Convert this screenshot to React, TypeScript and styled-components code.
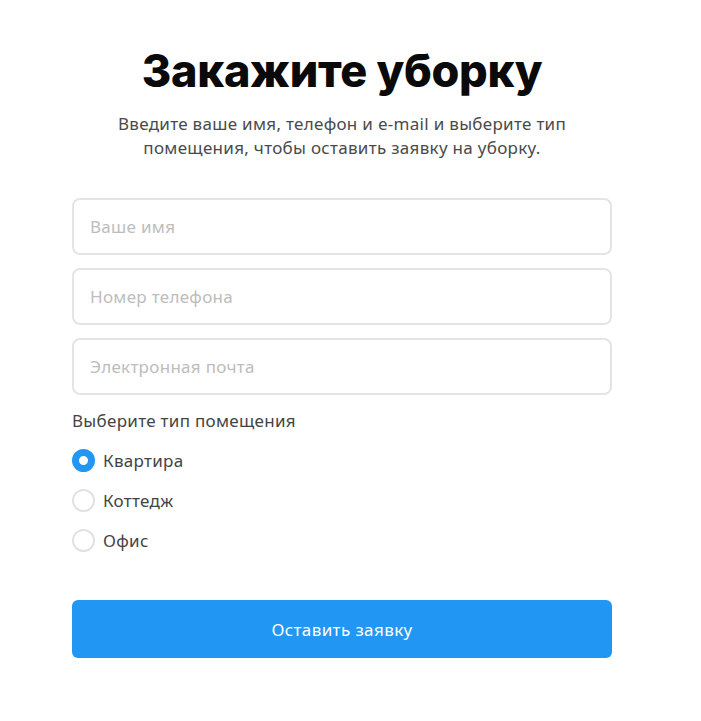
import React, { useState } from 'react'
import styled, { createGlobalStyle } from 'styled-components'

const GlobalStyle = createGlobalStyle`
  body {
    margin: 0;
    background: #fff;
    font-family: 'Noto Sans', 'Open Sans', sans-serif;
    letter-spacing: 0.3px;
  }
`

const Page = styled.main`
  width: 540px;
  margin-left: 72px;
  padding-top: 41px;
`

const Title = styled.h1`
  margin: 0;
  text-align: center;
  font-family: Inter, 'Noto Sans', sans-serif;
  font-size: 45px;
  font-weight: 800;
  line-height: 60px;
  letter-spacing: -0.3px;
  color: #0a0a0a;
`

const Lead = styled.p`
  margin: 11px auto 0;
  width: 480px;
  text-align: center;
  font-size: 17px;
  line-height: 24px;
  color: #4a4a4a;
`

const Form = styled.form`
  margin-top: 38px;
  display: flex;
  flex-direction: column;
`

const Fields = styled.div`
  display: flex;
  flex-direction: column;
  gap: 13px;
`

const Input = styled.input`
  box-sizing: border-box;
  width: 100%;
  height: 57px;
  padding: 0 16px;
  border: 2px solid #e4e4e4;
  border-radius: 8px;
  font-family: inherit;
  font-size: 17px;
  letter-spacing: 0.3px;
  color: #333;
  outline: none;
  &::placeholder {
    color: #bdbdbd;
  }
`

const Legend = styled.div`
  margin-top: 14px;
  font-size: 17px;
  line-height: 24px;
  color: #444;
`

const Options = styled.div`
  margin-top: 16px;
  display: flex;
  flex-direction: column;
  gap: 17px;
`

const Option = styled.label`
  display: flex;
  align-items: center;
  gap: 8px;
  font-size: 17px;
  line-height: 22px;
  color: #444;
  cursor: pointer;
`

const Dot = styled.span<{ $on: boolean }>`
  box-sizing: border-box;
  width: 23px;
  height: 23px;
  border-radius: 50%;
  border: ${({ $on }) => ($on ? '7px solid #2196f3' : '2px solid #e2e2e2')};
  background: #fff;
`

const HiddenRadio = styled.input`
  display: none;
`

const Submit = styled.button`
  margin-top: 48px;
  height: 58px;
  border: 0;
  border-radius: 6px;
  background: #2196f3;
  color: #fff;
  font-family: inherit;
  font-size: 17px;
  letter-spacing: 0.4px;
  cursor: pointer;
`

const rooms = ['Квартира', 'Коттедж', 'Офис']

const App = () => {
  const [room, setRoom] = useState('Квартира')
  return (
    <>
      <GlobalStyle />
      <Page>
        <Title>Закажите уборку</Title>
        <Lead>
          Введите ваше имя, телефон и e-mail и выберите тип помещения, чтобы оставить заявку на уборку.
        </Lead>
        <Form onSubmit={e => e.preventDefault()}>
          <Fields>
            <Input placeholder="Ваше имя" />
            <Input placeholder="Номер телефона" />
            <Input placeholder="Электронная почта" />
          </Fields>
          <Legend>Выберите тип помещения</Legend>
          <Options>
            {rooms.map(r => (
              <Option key={r}>
                <HiddenRadio type="radio" name="room" checked={room === r} onChange={() => setRoom(r)} />
                <Dot $on={room === r} />
                {r}
              </Option>
            ))}
          </Options>
          <Submit type="submit">Оставить заявку</Submit>
        </Form>
      </Page>
    </>
  )
}

export default App
